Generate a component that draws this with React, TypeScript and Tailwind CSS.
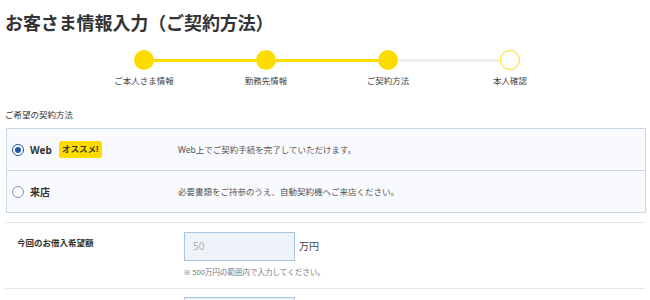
const steps = [
  { label: 'ご本人さま情報', state: 'done' },
  { label: '勤務先情報', state: 'done' },
  { label: 'ご契約方法', state: 'current' },
  { label: '本人確認', state: 'todo' },
];

const methods = [
  { id: 'web', name: 'Web', badge: 'オススメ!', desc: 'Web上でご契約手続を完了していただけます。', checked: true },
  { id: 'store', name: '来店', badge: '', desc: '必要書類をご持参のうえ、自動契約機へご来店ください。', checked: false },
];

function Radio({ checked }: { checked: boolean }) {
  return checked ? (
    <span className="flex h-[12px] w-[12px] items-center justify-center rounded-full border-[1.5px] border-[#1e56a8] bg-white">
      <span className="h-[6px] w-[6px] rounded-full bg-[#1e56a8]" />
    </span>
  ) : (
    <span className="h-[12px] w-[12px] rounded-full border-[1.5px] border-[#7c97b8] bg-white" />
  );
}

export default function App() {
  return (
    <div className="min-h-[300px] w-[650px] bg-white text-[#333] font-['Noto_Sans','Noto_Sans_CJK_JP',sans-serif]">
      <h1 className="pl-[5px] pt-[11px] text-[18px] font-bold leading-[24px] tracking-[-0.1px]">
        お客さま情報入力（ご契約方法）
      </h1>

      {/* stepper */}
      <div className="ml-[83px] mt-[15px] w-[488px]">
        <div className="flex items-center px-[51px]">
          {steps.map((s, i) => (
            <div key={s.label} className={i < steps.length - 1 ? 'flex flex-1 items-center' : 'flex items-center'}>
              {s.state === 'todo' ? (
                <span className="h-[20px] w-[20px] shrink-0 rounded-full border-[1.5px] border-[#ffdc00] bg-white" />
              ) : (
                <span className="h-[20px] w-[20px] shrink-0 rounded-full bg-[#ffdc00]" />
              )}
              {i < steps.length - 1 && (
                <span className={i < 2 ? 'h-[3px] flex-1 bg-[#ffdc00]' : 'h-[3px] flex-1 bg-[#efefef]'} />
              )}
            </div>
          ))}
        </div>
        <div className="mt-[5px] grid grid-cols-4">
          {steps.map((s) => (
            <div key={s.label} className="text-center text-[8.5px] leading-[12px] text-[#444]">
              {s.label}
            </div>
          ))}
        </div>
      </div>

      {/* contract method */}
      <p className="mt-[22px] pl-[5px] text-[8.5px] leading-[12px] text-[#333]">ご希望の契約方法</p>
      <div className="ml-[6px] mt-[7px] w-[640px] border border-[#c9d8e8] bg-[#f8fafd]">
        {methods.map((m, i) => (
          <div
            key={m.id}
            className={
              i === 0
                ? 'flex h-[42px] items-center border-b border-[#c9d8e8]'
                : 'flex h-[41px] items-center'
            }
          >
            <div className="flex w-[171px] items-center gap-[6px] pl-[5px]">
              <Radio checked={m.checked} />
              <span className="text-[10px] font-bold leading-none text-[#333]">{m.name}</span>
              {m.badge && (
                <span className="ml-[1px] flex h-[17px] w-[43px] items-center justify-center rounded-[2px] bg-[#ffdc00] text-[8.5px] font-bold text-[#3b3b1f]">
                  {m.badge}
                </span>
              )}
            </div>
            <p className="text-[8.5px] leading-[12px] text-[#555]">{m.desc}</p>
          </div>
        ))}
      </div>

      {/* amount */}
      <div className="ml-[5px] mt-[9px] w-[640px] border-t border-b border-[#e6e6e6]">
        <div className="flex items-start pb-[10px] pt-[9px]">
          <div className="w-[179px] pl-[12px] pt-[5px] text-[8.5px] font-bold leading-[12px] text-[#333]">
            今回のお借入希望額
          </div>
          <div>
            <div className="flex items-center gap-[4px]">
              <div className="flex h-[29px] w-[111px] items-center border border-[#a9c6e6] bg-[#eef3f9] pl-[8px] text-[10px] text-[#b4b4b4]">
                50
              </div>
              <span className="text-[10px] text-[#444]">万円</span>
            </div>
            <p className="mt-[5px] text-[7.5px] leading-[12px] text-[#777]">
              ※ 500万円の範囲内で入力してください。
            </p>
          </div>
        </div>
      </div>
      <div className="pl-[184px] pt-[8px]">
        <div className="h-[29px] w-[111px] border border-[#a9c6e6] bg-[#eef3f9]" />
      </div>
    </div>
  );
}
